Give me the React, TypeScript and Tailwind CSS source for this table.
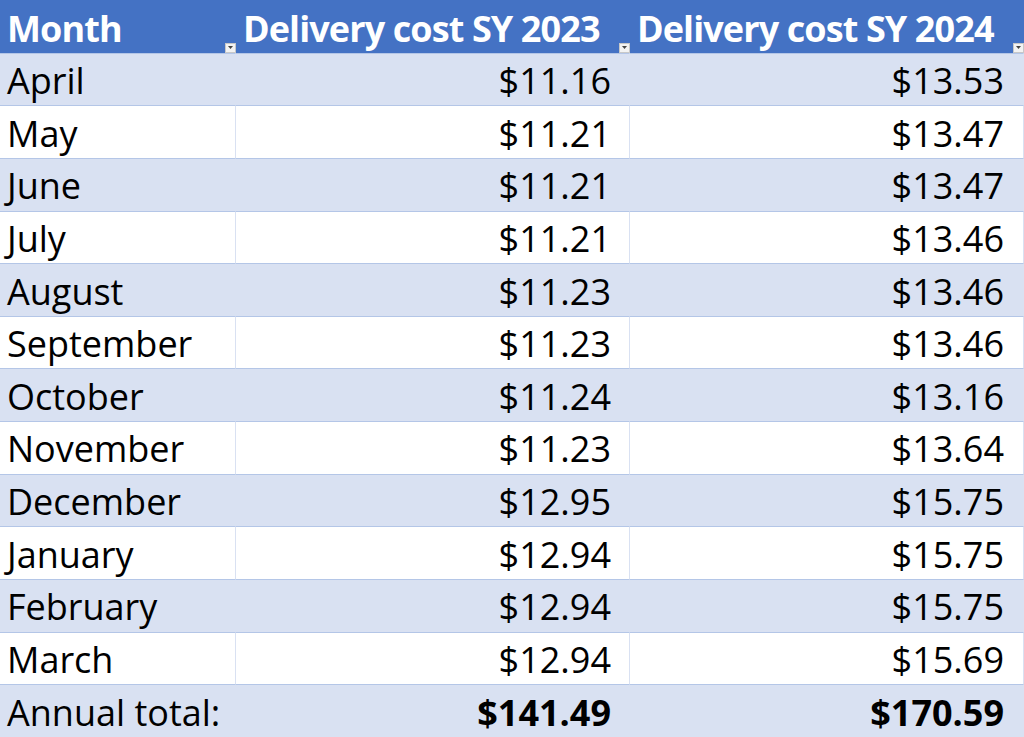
import React from "react";

const rows: [string, string, string][] = [
  ["April", "$11.16", "$13.53"],
  ["May", "$11.21", "$13.47"],
  ["June", "$11.21", "$13.47"],
  ["July", "$11.21", "$13.46"],
  ["August", "$11.23", "$13.46"],
  ["September", "$11.23", "$13.46"],
  ["October", "$11.24", "$13.16"],
  ["November", "$11.23", "$13.64"],
  ["December", "$12.95", "$15.75"],
  ["January", "$12.94", "$15.75"],
  ["February", "$12.94", "$15.75"],
  ["March", "$12.94", "$15.69"],
];

function FilterButton() {
  return (
    <span className="absolute right-0 bottom-0 w-[11px] h-[10px] bg-[#f3f3f3] border border-[#c8c8c8] flex items-center justify-center">
      <svg width="5" height="3" viewBox="0 0 5 3">
        <path d="M0 0h5L2.5 3z" fill="#444" />
      </svg>
    </span>
  );
}

export default function App() {
  const cell = "flex items-center border-r border-[#D9E1F2] leading-none pt-[3px]";
  return (
    <div
      className="w-[1024px] h-[737px] overflow-hidden bg-white text-black grid grid-cols-[236px_394px_394px] grid-rows-[repeat(14,minmax(0,1fr))]"
      style={{ fontFamily: '"Open Sans", "Noto Sans", sans-serif' }}
    >
      {["Month", "Delivery cost SY 2023", "Delivery cost SY 2024"].map((h) => (
        <div
          key={h}
          className="relative flex items-center pl-[7px] pt-[5px] bg-[#4472C4] text-white font-bold text-[36px] tracking-[-0.9px] leading-none"
        >
          {h}
          <FilterButton />
        </div>
      ))}

      {rows.map(([month, a, b], i) => {
        const bg = i % 2 === 0 ? "bg-[#D9E1F2]" : "bg-white";
        return (
          <React.Fragment key={month}>
            <div className={`${cell} ${bg} border-t border-t-[#B4C6E7] pl-[7px] text-[36px]`}>{month}</div>
            <div className={`${cell} ${bg} border-t border-t-[#B4C6E7] justify-end pr-[18px] text-[36px]`}>{a}</div>
            <div className={`${cell} ${bg} border-t border-t-[#B4C6E7] justify-end pr-[19px] text-[36px]`}>{b}</div>
          </React.Fragment>
        );
      })}

      <div className={`${cell} bg-[#D9E1F2] border-t border-t-[#B4C6E7] pl-[7px] text-[36px]`}>Annual total:</div>
      <div className={`${cell} bg-[#D9E1F2] border-t border-t-[#B4C6E7] justify-end pr-[18px] text-[36px] font-bold`}>$141.49</div>
      <div className={`${cell} bg-[#D9E1F2] border-t border-t-[#B4C6E7] justify-end pr-[19px] text-[36px] font-bold`}>$170.59</div>
    </div>
  );
}
